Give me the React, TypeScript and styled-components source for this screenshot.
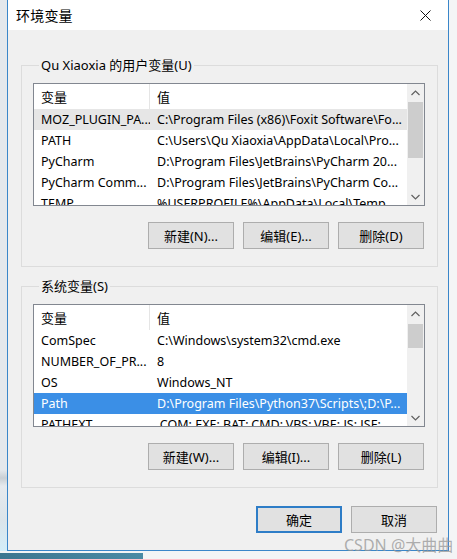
import React from "react";
import styled, { createGlobalStyle } from "styled-components";

const Global = createGlobalStyle`
  html, body { margin: 0; padding: 0; }
  body {
    width: 457px; height: 559px; overflow: hidden;
    background: #eef1f4;
    font-family: "Noto Sans", "Noto Sans CJK SC", sans-serif;
  }
`;

const FONT = `"Noto Sans", "Noto Sans CJK SC", sans-serif`;

const Page = styled.div`
  position: relative;
  width: 457px;
  height: 559px;
  display: flex;
  flex-direction: column;
  background: #f3f4f5;
`;

const Main = styled.div`
  display: flex;
  flex: none;
  height: 551px;
`;

const LeftEdge = styled.div`
  width: 7px;
  background: linear-gradient(to bottom, #e4e8ec 0, #e4e8ec 470px, #c9cfd4 478px, #e6eaee 486px, #dbe4ea 520px, #d3eef9 551px);
`;

const Window = styled.div`
  width: 440px;
  height: 550px;
  border-left: 1px solid #3a86c9;
  border-right: 1px solid #3a86c9;
  border-bottom: 1px solid #3a86c9;
  display: flex;
  flex-direction: column;
  background: #f0f0f0;
  font-family: ${FONT};
  font-size: 13px;
  color: #000;
`;

const RightEdge = styled.div`
  flex: 1;
  background: #f4f5f6;
`;

const TitleBar = styled.div`
  height: 30px;
  flex: none;
  background: #fff;
  display: flex;
  align-items: center;
  justify-content: space-between;
  padding-left: 8px;
`;

const TitleText = styled.span`
  font-size: 14px;
  letter-spacing: 0.2px;
`;

const CloseBtn = styled.div`
  width: 46px;
  height: 30px;
  display: flex;
  align-items: center;
  justify-content: center;
`;

const Body = styled.div`
  flex: 1;
  display: flex;
  flex-direction: column;
  padding: 27px 10px 0 13px;
`;

const Group = styled.fieldset<{ $mt?: number }>`
  margin: ${(p) => p.$mt ?? 0}px 0 0 0;
  padding: 10px 12px 17px 11px;
  border: 1px solid #dcdcdc;
  min-width: 0;
  display: flex;
  flex-direction: column;
`;

const Legend = styled.legend`
  margin-left: 6px;
  padding: 0 2px;
  line-height: 16px;
  font-size: 13px;
`;

const ListBox = styled.div`
  height: 121px;
  border: 1px solid #828790;
  background: #fff;
  display: flex;
  overflow: hidden;
  font-size: 12.5px;
`;

const ListMain = styled.div`
  flex: 1;
  display: flex;
  flex-direction: column;
  overflow: hidden;
`;

const HeaderRow = styled.div`
  height: 25px;
  flex: none;
  display: flex;
  align-items: stretch;
`;

const HeaderCell = styled.div<{ $w?: number; $divider?: boolean }>`
  ${(p) => (p.$w ? `width: ${p.$w}px; flex: none;` : "flex: 1;")}
  padding-left: 7px;
  display: flex;
  align-items: center;
  border-right: ${(p) => (p.$divider ? "1px solid #e5e5e5" : "none")};
  box-sizing: border-box;
  white-space: nowrap;
  font-size: 13px;
`;

const Row = styled.div<{ $state?: "selected" | "inactive" }>`
  height: 21px;
  flex: none;
  display: flex;
  align-items: center;
  background: ${(p) =>
    p.$state === "selected" ? "#3b8fe6" : p.$state === "inactive" ? "#e6e6e6" : "transparent"};
  color: ${(p) => (p.$state === "selected" ? "#fff" : "#000")};
`;

const Cell = styled.div<{ $w?: number }>`
  ${(p) => (p.$w ? `width: ${p.$w}px; flex: none;` : "flex: 1;")}
  padding-left: 7px;
  box-sizing: border-box;
  white-space: nowrap;
  overflow: hidden;
`;

const ScrollBar = styled.div`
  width: 17px;
  flex: none;
  background: #f0f0f0;
  display: flex;
  flex-direction: column;
`;

const ScrollArrow = styled.div`
  height: 17px;
  flex: none;
  display: flex;
  align-items: center;
  justify-content: center;
`;

const ScrollTrack = styled.div`
  flex: 1;
  display: flex;
  flex-direction: column;
`;

const Thumb = styled.div`
  background: #cdcdcd;
  margin: 0 1px;
  flex: none;
`;

const ButtonRow = styled.div<{ $mt: number }>`
  display: flex;
  justify-content: flex-end;
  gap: 9px;
  margin-top: ${(p) => p.$mt}px;
  padding-right: 1px;
`;

const Button = styled.div<{ $default?: boolean }>`
  width: 86px;
  height: 27px;
  box-sizing: border-box;
  background: #e1e1e1;
  border: ${(p) => (p.$default ? "2px solid #2e7dc7" : "1px solid #adadad")};
  display: flex;
  align-items: center;
  justify-content: center;
  font-size: 13px;
`;

const Watermark = styled.div`
  position: absolute;
  left: 344px;
  top: 532px;
  font-family: ${FONT};
  font-size: 16px;
  color: rgba(150, 150, 150, 0.75);
  white-space: nowrap;
`;

const Bottom = styled.div`
  flex: 1;
  display: flex;
`;

const Taskbar = styled.div`
  width: 143px;
  margin-top: 2px;
  background: linear-gradient(to right, #3d7690, #4a8aa5);
`;

const BottomRest = styled.div`
  flex: 1;
  background: #f3f4f5;
`;

const Up = () => (
  <svg width="9" height="6" viewBox="0 0 9 6">
    <path d="M0.5 5 L4.5 1 L8.5 5" fill="none" stroke="#606060" strokeWidth="1.2" />
  </svg>
);
const Down = () => (
  <svg width="9" height="6" viewBox="0 0 9 6">
    <path d="M0.5 1 L4.5 5 L8.5 1" fill="none" stroke="#606060" strokeWidth="1.2" />
  </svg>
);

type RowData = { name: string; value: string; state?: "selected" | "inactive" };

const VarList: React.FC<{ rows: RowData[]; thumbTop: number; thumbH: number }> = ({
  rows,
  thumbTop,
  thumbH,
}) => (
  <ListBox>
    <ListMain>
      <HeaderRow>
        <HeaderCell $w={116} $divider>变量</HeaderCell>
        <HeaderCell>值</HeaderCell>
      </HeaderRow>
      {rows.map((r, i) => (
        <Row key={i} $state={r.state}>
          <Cell $w={116}>{r.name}</Cell>
          <Cell>{r.value}</Cell>
        </Row>
      ))}
    </ListMain>
    <ScrollBar>
      <ScrollArrow>
        <Up />
      </ScrollArrow>
      <ScrollTrack>
        <div style={{ height: thumbTop }} />
        <Thumb style={{ height: thumbH }} />
      </ScrollTrack>
      <ScrollArrow>
        <Down />
      </ScrollArrow>
    </ScrollBar>
  </ListBox>
);

const userRows: RowData[] = [
  { name: "MOZ_PLUGIN_PA...", value: "C:\\Program Files (x86)\\Foxit Software\\Fo...", state: "inactive" },
  { name: "PATH", value: "C:\\Users\\Qu Xiaoxia\\AppData\\Local\\Pro..." },
  { name: "PyCharm", value: "D:\\Program Files\\JetBrains\\PyCharm 20..." },
  { name: "PyCharm Comm...", value: "D:\\Program Files\\JetBrains\\PyCharm Co..." },
  { name: "TEMP", value: "%USERPROFILE%\\AppData\\Local\\Temp" },
];

const sysRows: RowData[] = [
  { name: "ComSpec", value: "C:\\Windows\\system32\\cmd.exe" },
  { name: "NUMBER_OF_PR...", value: "8" },
  { name: "OS", value: "Windows_NT" },
  { name: "Path", value: "D:\\Program Files\\Python37\\Scripts\\;D:\\P...", state: "selected" },
  { name: "PATHEXT", value: ".COM;.EXE;.BAT;.CMD;.VBS;.VBE;.JS;.JSE;..." },
];

export default function App() {
  return (
    <>
      <Global />
      <Page>
        <Main>
          <LeftEdge />
          <Window>
            <TitleBar>
              <TitleText>环境变量</TitleText>
              <CloseBtn>
                <svg width="11" height="11" viewBox="0 0 11 11">
                  <path d="M0.5 0.5 L10.5 10.5 M10.5 0.5 L0.5 10.5" stroke="#111" strokeWidth="1" />
                </svg>
              </CloseBtn>
            </TitleBar>
            <Body>
              <Group>
                <Legend>Qu Xiaoxia 的用户变量(U)</Legend>
                <VarList rows={userRows} thumbTop={1} thumbH={56} />
                <ButtonRow $mt={16}>
                  <Button>新建(N)...</Button>
                  <Button>编辑(E)...</Button>
                  <Button>删除(D)</Button>
                </ButtonRow>
              </Group>
              <Group $mt={11}>
                <Legend>系统变量(S)</Legend>
                <VarList rows={sysRows} thumbTop={2} thumbH={24} />
                <ButtonRow $mt={16}>
                  <Button>新建(W)...</Button>
                  <Button>编辑(I)...</Button>
                  <Button>删除(L)</Button>
                </ButtonRow>
              </Group>
              <ButtonRow $mt={18}>
                <Button $default>确定</Button>
                <Button>取消</Button>
              </ButtonRow>
            </Body>
          </Window>
          <RightEdge />
        </Main>
        <Bottom>
          <Taskbar />
          <BottomRest />
        </Bottom>
        <Watermark>CSDN @大曲曲</Watermark>
      </Page>
    </>
  );
}
